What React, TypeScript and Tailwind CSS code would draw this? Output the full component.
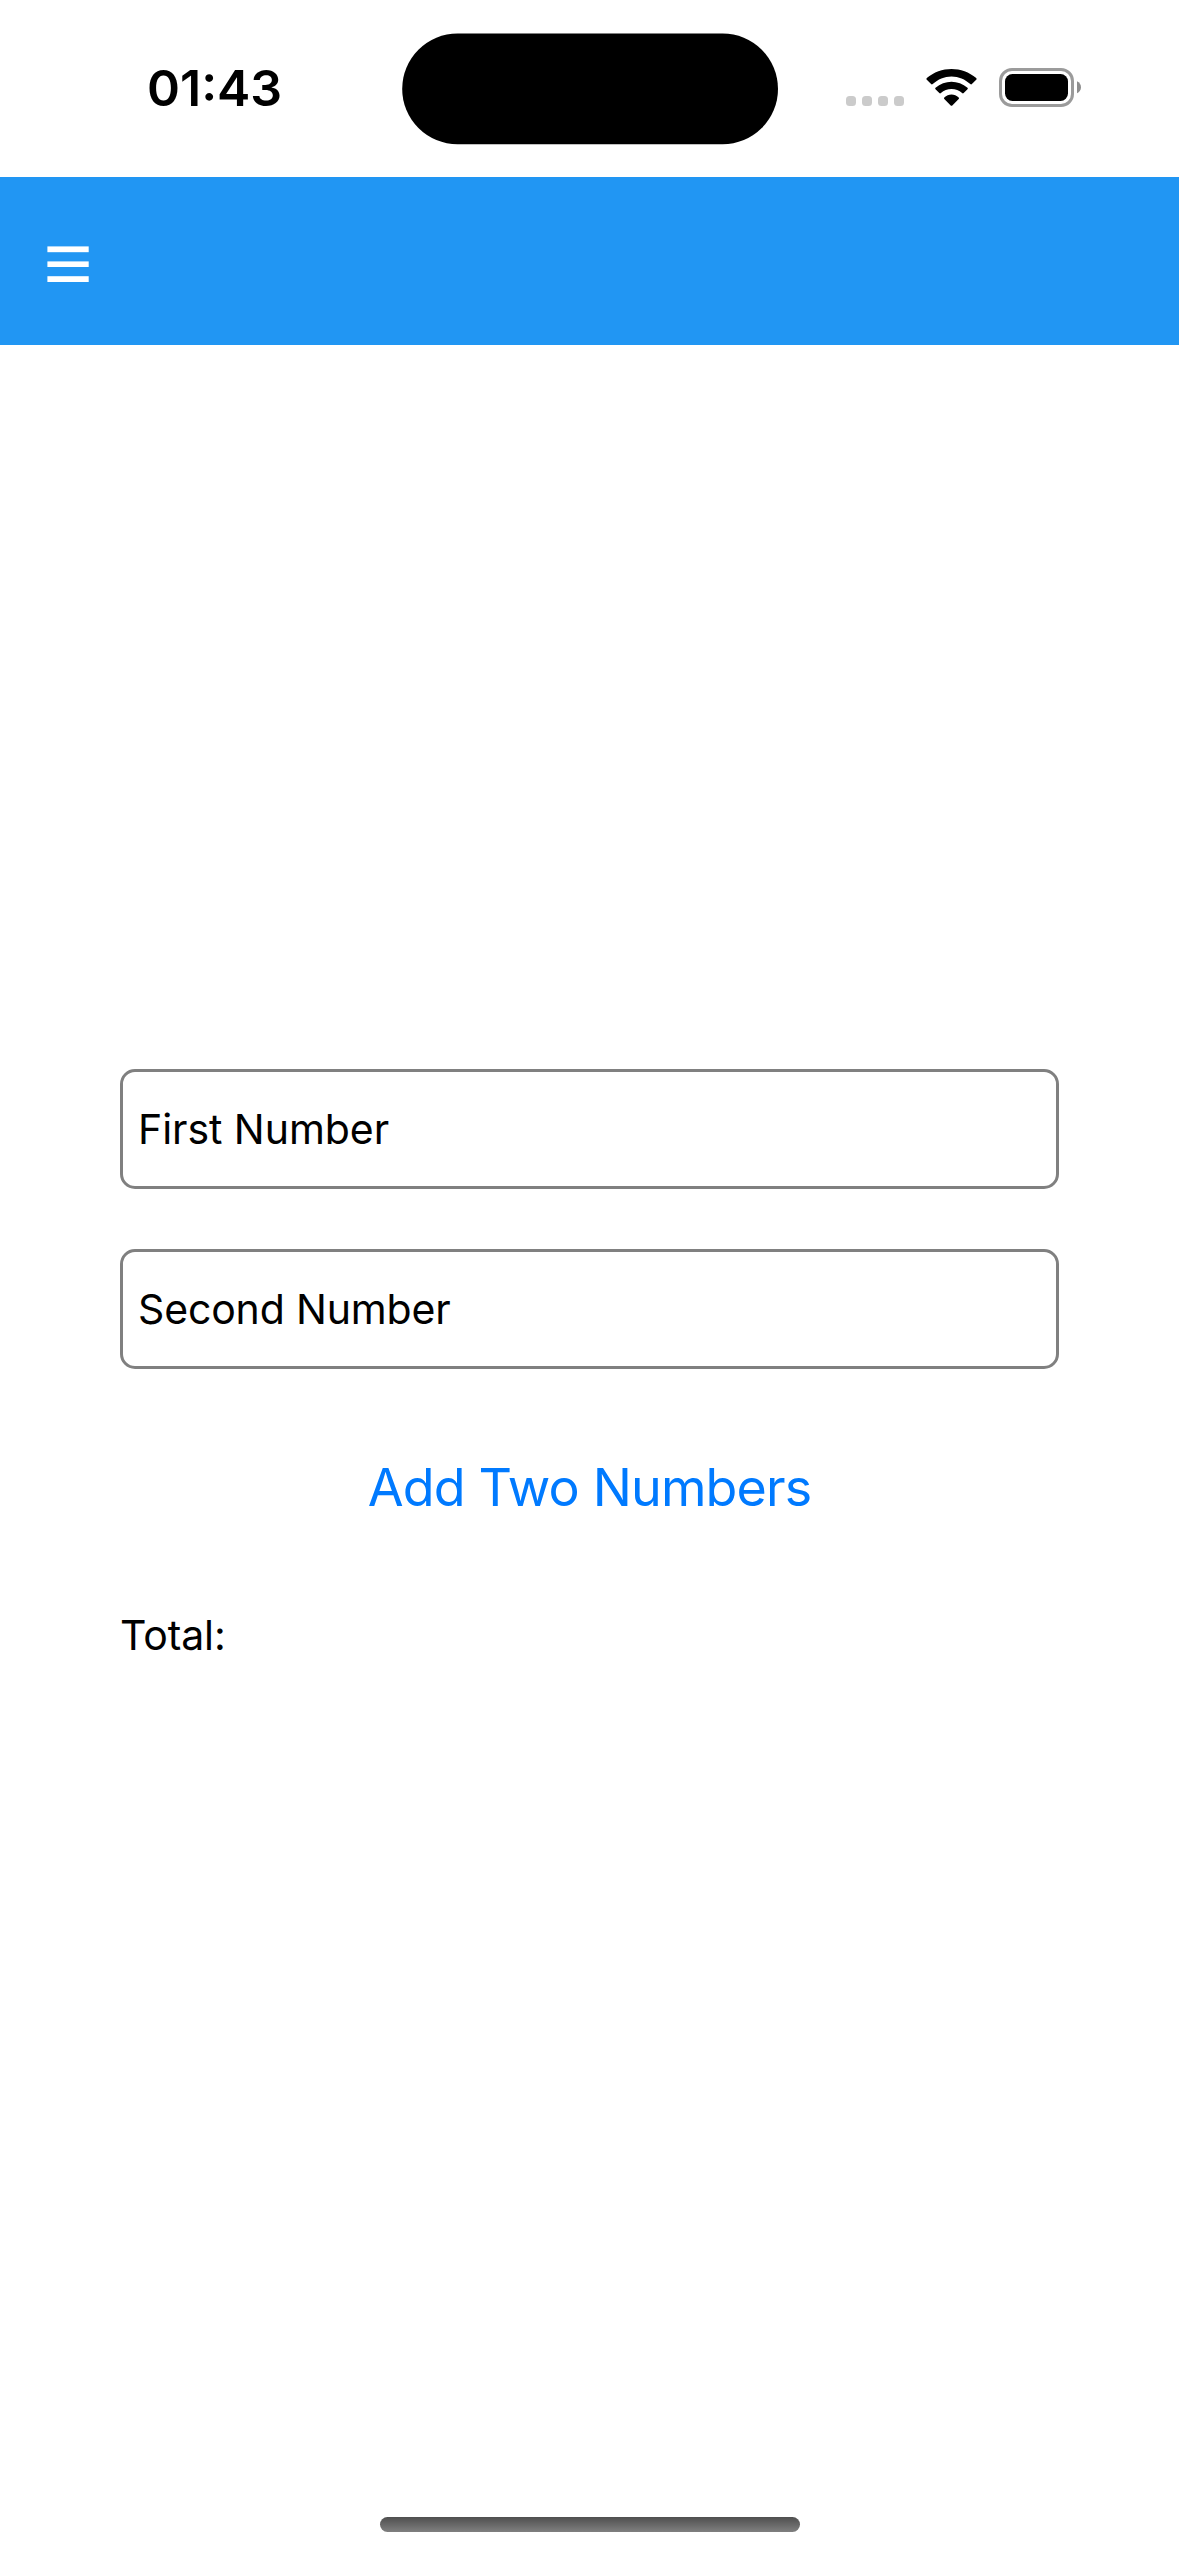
import { useState } from "react";

function CellularDots() {
  return (
    <div className="mt-[96px] ml-[68px] flex gap-[6px]">
      <span className="size-[10px] rounded-[3.5px] bg-[#cbcbcb]" />
      <span className="size-[10px] rounded-[3.5px] bg-[#cbcbcb]" />
      <span className="size-[10px] rounded-[3.5px] bg-[#cbcbcb]" />
      <span className="size-[10px] rounded-[3.5px] bg-[#cbcbcb]" />
    </div>
  );
}

function WifiIcon() {
  return (
    <svg className="mt-[68px] ml-[22px] h-[39px] w-[51px]" viewBox="0 0 51 39" fill="#000">
      <path d="M25.5 8.4C32.6 8.4 39.1 11.2 44.3 16C44.8 16.5 45.4 16.5 45.9 16L50.2 11.7C50.7 11.2 50.7 10.6 50.2 10.1C36.4 -2.2 14.6 -2.2 .8 10.1C.3 10.6 .3 11.2 .8 11.7L5.1 16C5.6 16.5 6.2 16.5 6.7 16C11.9 11.2 18.4 8.4 25.5 8.4Z" />
      <path d="M25.5 21C29.5 21 33.2 22.5 36.1 25.1C36.6 25.6 37.2 25.6 37.7 25.1L41.5 21.3C42 20.8 42 20.2 41.5 19.7C32.4 11.7 18.6 11.7 9.5 19.7C9 20.2 9 20.8 9.5 21.3L13.3 25.1C13.8 25.6 14.4 25.6 14.9 25.1C17.8 22.5 21.5 21 25.5 21Z" />
      <path d="M32.7 31.1C33.2 30.6 33.2 30 32.7 29.5C28.6 25.5 22.4 25.5 18.3 29.5C17.8 30 17.8 30.6 18.3 31.1L24.7 37.4C25.2 37.9 25.8 37.9 26.3 37.4Z" />
    </svg>
  );
}

function BatteryIcon() {
  return (
    <svg className="mt-[68px] ml-[22px] h-[39px] w-[83px]" viewBox="0 0 83 39">
      <rect x="1.5" y="1.5" width="72" height="36" rx="11.5" fill="none" stroke="#9b9b9b" strokeWidth="3" />
      <rect x="6" y="6" width="63" height="27" rx="7.5" fill="#000" />
      <path d="M78 13.2C80.5 14.2 82 16.6 82 19.2C82 21.8 80.5 24.2 78 25.2Z" fill="#8e8e8e" />
    </svg>
  );
}

function StatusBar() {
  return (
    <div className="flex h-[177px] shrink-0 items-start">
      <span className="mt-[58px] ml-[147px] w-[254.5px] text-[50px] leading-[60px] font-semibold">01:43</span>
      <svg className="mt-[33px] h-[112px] w-[376.5px]" viewBox="0 0 376.5 112">
        <rect x="0.2" y="0.5" width="375.8" height="110.8" rx="55.4" fill="#000" />
      </svg>
      <CellularDots />
      <WifiIcon />
      <BatteryIcon />
    </div>
  );
}

function AppHeader() {
  return (
    <header className="flex h-[168px] shrink-0 items-center bg-[#2196f3] pl-[47px]">
      <button aria-label="Menu">
        <svg className="mt-[6px] h-[36px] w-[42px]" viewBox="0 0 42 36" fill="#fff">
          <rect x="0.4" y="0.4" width="41.3" height="5.8" />
          <rect x="0.4" y="15.4" width="41.3" height="5.6" />
          <rect x="0.4" y="30.2" width="41.3" height="5.8" />
        </svg>
      </button>
    </header>
  );
}

const fieldClass =
  "block h-[120px] w-full rounded-[15px] border-[3px] border-[#808080] bg-transparent pr-[15px] pl-[15px] text-[41px] leading-[50px] outline-none placeholder:text-black placeholder:opacity-100";

export default function App() {
  const [first, setFirst] = useState("");
  const [second, setSecond] = useState("");
  const [total, setTotal] = useState("");

  return (
    <div className="flex h-[2556px] w-[1179px] flex-col overflow-hidden bg-white font-['Inter',sans-serif] text-black">
      <StatusBar />
      <AppHeader />
      <main className="flex flex-1 flex-col px-[120px] pt-[724px]">
        <input
          className={`${fieldClass} tracking-[-0.05px]`}
          placeholder="First Number"
          value={first}
          onChange={(e) => setFirst(e.target.value)}
        />
        <input
          className={`${fieldClass} mt-[60px] tracking-[-0.15px]`}
          placeholder="Second Number"
          value={second}
          onChange={(e) => setSecond(e.target.value)}
        />
        <button
          className="mt-[87px] self-center text-[52px] leading-[63px] tracking-[-0.86px] text-[#007aff]"
          onClick={() => setTotal(String(Number(first) + Number(second)))}
        >
          Add Two Numbers
        </button>
        <p className="mt-[91px] text-[41px] leading-[50px] tracking-[-0.1px]">Total: {total}</p>
      </main>
      <div className="mb-[24px] h-[15px] w-[420px] shrink-0 self-center rounded-full bg-linear-to-b from-[#4f4f4f] to-[#808080]" />
    </div>
  );
}
